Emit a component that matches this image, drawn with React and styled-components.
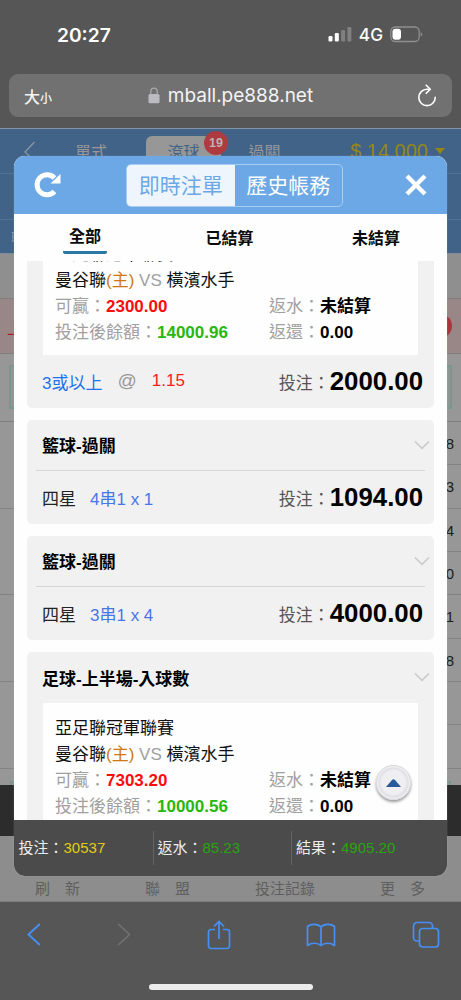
import styled, { createGlobalStyle } from "styled-components";

const GlobalStyle = createGlobalStyle`
    *{
        box-sizing: border-box;
    }

    body{
        margin: 0;
        background: #565656;
        font-family: "Liberation Sans", "Noto Sans CJK TC", sans-serif;
    }
`;

const Screen = styled.div`
    display: flex;
    flex-direction: column;
    width: 461px;
    height: 1000px;
    overflow: hidden;
    background: #565656;
    white-space: nowrap;
`;

/* ---- browser ---- */

const StatusBar = styled.div`
    display: flex;
    align-items: center;
    justify-content: space-between;
    height: 74px;
    padding: 0 38px 5px 57px;
    color: #fff;
    font-family: Inter, sans-serif;
`;

const Clock = styled.div`
    font-size: 19.2px;
    font-weight: 600;
`;

const StatusIcons = styled.div`
    display: flex;
    align-items: center;
    gap: 7px;
    font-size: 17.2px;
    font-weight: 500;
`;

const AddressBar = styled.div`
    display: grid;
    grid-template-columns: 100px 1fr 100px;
    align-items: center;
    height: 43px;
    margin: 0 9px 11px;
    padding: 0 15px;
    border-radius: 9px;
    background: #717171;
    color: #f4f4f4;
    font-size: 16px;
    font-weight: 500;
    font-family: "Noto Sans CJK TC", sans-serif;

    small{
        font-size: 12px;
    }
    > svg{
        justify-self: end;
    }
`;

const Address = styled.div`
    display: flex;
    align-items: center;
    justify-content: center;
    gap: 8px;
    font-family: Inter, sans-serif;
    font-size: 19px;
    font-weight: 400;
`;

const Toolbar = styled.div`
    display: flex;
    align-items: center;
    justify-content: space-between;
    height: 65px;
    padding: 0 21px 0 27px;
`;

const HomeIndicator = styled.div`
    width: 164px;
    height: 6px;
    margin: 17px auto 0 149px;
    border-radius: 3px;
    background: #ececec;
`;

/* ---- site behind the popup ---- */

const Page = styled.div`
    position: relative;
    display: flex;
    flex-direction: column;
    height: 774px;
    background: #979797;
    border-top: 1px solid #8295a8;
`;

const PageNav = styled.div`
    display: flex;
    height: 45px;
    padding: 7px 16px 0 24px;
    background: #416388;
    border-bottom: 1px solid #50718f;
    color: #979797;
    font-size: 16px;
`;

const NavItem = styled.div`
    width: ${props => props.width}px;
    height: 38px;
    padding-top: 3px;
    text-align: center;
    border-radius: 6px 6px 0 0;
    background: ${props => props.active ? '#979797' : 'transparent'};
    color: ${props => props.active ? '#416388' : '#979797'};
`;

const NavBadge = styled.div`
    position: absolute;
    left: 204px;
    top: 2px;
    width: 24px;
    height: 24px;
    border-radius: 50%;
    background: #ad3b40;
    color: #bdb3b3;
    font-size: 12.5px;
    font-weight: 700;
    line-height: 24px;
    text-align: center;
`;

const Balance = styled.div`
    display: flex;
    gap: 7px;
    margin-left: auto;
    color: #968715;
    font-size: 20px;
    line-height: 30px;

    svg{
        margin-top: 12px;
    }
`;

const BlueBand = styled.div`
    height: ${props => props.height}px;
    padding: 7px 0 0 11px;
    background: #416388;
    border-bottom: 1px solid ${props => props.last ? '#7c8c9c' : '#50718f'};
    color: #8a98a6;
    font-size: 13px;
`;

const GrayBand = styled.div`
    height: 45px;
    background: #8f8f8f;
    border-bottom: 1px solid #7f7f7f;
`;

const PinkBand = styled.div`
    display: flex;
    align-items: center;
    justify-content: space-between;
    height: 55px;
    padding: 0 9px 0 7px;
    background: #998686;
    border-bottom: 1px solid #7f7f7f;
    color: #a81e24;
    font-size: 17px;
`;

const RedDot = styled.div`
    width: 24px;
    height: 24px;
    border-radius: 50%;
    background: #a83539;
    color: #979797;
    line-height: 22px;
    text-align: center;
`;

const OddsBand = styled.div`
    height: 68px;
    padding: 11px 9px;
    border-bottom: 1px solid #7f7f7f;
`;

const OddsBox = styled.div`
    height: 44px;
    border: 2px solid #7b968a;
    background: #8f9693;
`;

const OddsTable = styled.div`
    display: grid;
    grid-template-columns: 1fr 1fr;
    height: 363px;
    overflow: hidden;
`;

const OddsCell = styled.div`
    height: ${props => props.tall ? 86.7 : 43.35}px;
    padding-right: 7px;
    border-bottom: 1px solid #838383;
    color: #1c1c1c;
    font-size: 15px;
    line-height: 43px;
    text-align: right;
`;

const OddsPeek = styled.div`
    grid-column: 1 / 3;
    height: 16px;
    margin: 12px 10px 0;
    border: 2px solid #7b968a;
`;

const BlackBand = styled.div`
    height: 51px;
    background: #2c2c2c;
`;

const PageTabs = styled.div`
    display: flex;
    align-items: flex-end;
    justify-content: space-between;
    flex: 1;
    padding: 0 36px 3px 35px;
    background: #8d8d8d;
    color: #5f5f5f;
    font-size: 15px;
    border-bottom: 1px solid #7d7d7d;
`;

/* ---- popup ---- */

const Popup = styled.div`
    position: absolute;
    left: 14px;
    top: 27px;
    display: flex;
    flex-direction: column;
    width: 433px;
    height: 720px;
    border-radius: 11px;
    overflow: hidden;
    background: #fefefe;
    box-shadow: 0 0 1px #bbb;
`;

const PopupHead = styled.div`
    display: flex;
    align-items: center;
    justify-content: space-between;
    height: 58px;
    padding: 0 20px;
    background: #6ba8e5;
`;

const Switch = styled.div`
    display: flex;
    width: 217px;
    height: 43px;
    margin-left: 2px;
    border: 1px solid #a9cdf1;
    border-radius: 5px;
    overflow: hidden;
`;

const SwitchButton = styled.div`
    flex: 1;
    background: ${props => props.active ? '#eff5fd' : 'transparent'};
    color: ${props => props.active ? '#6ba8e5' : '#fff'};
    font-size: 21px;
    line-height: 42px;
    text-align: center;
`;

const FilterTabs = styled.div`
    display: flex;
    justify-content: space-between;
    height: 47px;
    padding: 9px 47px 0 49px;
`;

const FilterTab = styled.div`
    height: 31px;
    padding: ${props => props.active ? '0 6px' : '2px 0 0'};
    border-bottom: ${props => props.active ? '3px solid #2878a3' : 'none'};
    border-radius: 2px;
    color: #0a0a0a;
    font-size: 16px;
    font-weight: 700;
    line-height: 27px;
`;

const BetList = styled.div`
    flex: 1;
    overflow: hidden;
    padding: 0 13px;
`;

const BetScroll = styled.div`
    display: flex;
    flex-direction: column;
    gap: 12px;
    margin-top: -84px;
`;

const Card = styled.div`
    padding: 0 9px;
    border-radius: 5px;
    background: #f1f1f1;
`;

const CardTitle = styled.div`
    display: flex;
    align-items: center;
    justify-content: space-between;
    height: 51.5px;
    padding: 0 0 0 6px;
    border-bottom: ${props => props.line ? '1.5px solid #d6d6d6' : 'none'};
    color: #000;
    font-size: 17px;
    font-weight: 700;

    svg{
        margin-right: -5px;
    }
`;

const Match = styled.div`
    display: grid;
    grid-template-columns: 214px 1fr;
    height: 126.5px;
    margin: 0 7px;
    padding: 13px 12px 0;
    background: #fefefe;
    color: #111;
    font-size: 17px;
    line-height: 26px;
    grid-auto-rows: 26px;
`;

const Wide = styled.div`
    grid-column: 1 / 3;

    em{
        font-style: normal;
        color: #d0780f;
    }
    span{
        color: #a0a0a0;
    }
`;

const Field = styled.div`
    color: #a0a0a0;

    b{
        color: ${props => props.color || '#000'};
    }
`;

const Stake = styled.div`
    display: flex;
    align-items: center;
    justify-content: space-between;
    height: 52.5px;
    padding: 0 2px 0 6px;
    color: #222;
    font-size: 17px;
`;

const Pick = styled.div`
    display: flex;
    align-items: center;
    gap: ${props => props.gap || 14}px;
    color: ${props => props.color || '#222'};

    i{
        font-style: normal;
        color: #4876e6;
    }
    small{
        font-size: 19px;
        color: #999;
    }
    strong{
        font-weight: 400;
        color: #fb1c1c;
    }
`;

const Amount = styled.div`
    display: flex;
    align-items: center;
    color: #555;

    b{
        color: #000;
        font-size: 25.8px;
    }
`;

const TopButton = styled.div`
    position: absolute;
    right: 36px;
    top: 609px;
    display: flex;
    align-items: center;
    justify-content: center;
    width: 35px;
    height: 35px;
    border: 1px solid #d5d5d8;
    border-radius: 50%;
    background: radial-gradient(#efeff2 50%, #e0e0e4 62%, #f4f4f6 70%);
    box-shadow: 0 2px 3px rgba(0, 0, 0, .4);
`;

const Totals = styled.div`
    display: grid;
    grid-template-columns: 138.5px 138.5px 1fr;
    align-items: center;
    height: 56px;
    background: #4b4b4b;
`;

const Total = styled.div`
    height: 34px;
    padding-left: ${props => props.first ? 4.5 : 4}px;
    border-left: ${props => props.first ? 'none' : '1px solid #646464'};
    color: #eee;
    font-size: 15px;
    line-height: 33px;

    span{
        color: ${props => props.color};
    }
`;

const bets = [
    { title: '足球-上半場-入球數', win: '2300.00', balance: '14000.96', amount: '2000.00' },
    { title: '籃球-過關', combo: '4串1 x 1', amount: '1094.00' },
    { title: '籃球-過關', combo: '3串1 x 4', amount: '4000.00' },
    { title: '足球-上半場-入球數', win: '7303.20', balance: '10000.56', amount: '2000.00' },
];

const BetCard = ({ bet }) => {
    return (
        <Card>
            <CardTitle line={bet.combo ? 1 : undefined}>
                {bet.title}
                <svg width="16" height="10" viewBox="0 0 16 10" fill="none" stroke="#cbcbcb" strokeWidth="1.7">
                    <path d="M1 1.5 8 8.3 15 1.5" />
                </svg>
            </CardTitle>
            {!bet.combo &&
                <Match>
                    <Wide>亞足聯冠軍聯賽</Wide>
                    <Wide>曼谷聯<em>(主)</em> <span>VS</span> 橫濱水手</Wide>
                    <Field color="#fb0d0d">可贏：<b>{bet.win}</b></Field>
                    <Field>返水：<b>未結算</b></Field>
                    <Field color="#27b80b">投注後餘額：<b>{bet.balance}</b></Field>
                    <Field>返還：<b>0.00</b></Field>
                </Match>
            }
            <Stake>
                {bet.combo
                    ? <Pick>四星<i>{bet.combo}</i></Pick>
                    : <Pick color="#1b73ee" gap="15">3或以上<small>@</small><strong>1.15</strong></Pick>
                }
                <Amount>投注：<b>{bet.amount}</b></Amount>
            </Stake>
        </Card>
    );
}

const App = () => {
    return (
        <>
            <GlobalStyle />
            <Screen>
                <StatusBar>
                    <Clock>20:27</Clock>
                    <StatusIcons>
                        <svg width="24" height="15" viewBox="0 0 24 15" fill="#fff">
                            <rect x="0.5" y="9" width="4" height="5.5" rx="1.2" />
                            <rect x="6.8" y="6" width="4" height="8.5" rx="1.2" />
                            <rect x="13.1" y="3" width="4" height="11.5" rx="1.2" opacity=".25" />
                            <rect x="19.4" y="0" width="4" height="14.5" rx="1.2" opacity=".25" />
                        </svg>
                        4G
                        <svg width="33" height="17" viewBox="0 0 33 17">
                            <rect x="0.8" y="1" width="28.4" height="14.5" rx="4.5" fill="none" stroke="#8e8e8e" strokeWidth="1.3" />
                            <rect x="2.5" y="2.8" width="8.5" height="11" rx="3" fill="#fff" />
                            <path d="M30.7 6a2.5 2.5 0 0 1 0 4.6z" fill="#8e8e8e" />
                        </svg>
                    </StatusIcons>
                </StatusBar>
                <AddressBar>
                    <div>大<small>小</small></div>
                    <Address>
                        <svg width="12" height="17" viewBox="0 0 12 17">
                            <rect x="0.5" y="7" width="11" height="9.3" rx="1.5" fill="#bdbbc2" />
                            <path d="M2.8 7.5V4.4a3.2 3.2 0 0 1 6.4 0v3.1" fill="none" stroke="#a9a8ad" strokeWidth="1.3" />
                        </svg>
                        mball.pe888.net
                    </Address>
                    <svg width="20" height="23" viewBox="0 0 20 23" fill="none" stroke="#fff" strokeWidth="1.6" strokeLinecap="round" strokeLinejoin="round">
                        <path d="M12.2 5.2H10a8.2 8.2 0 1 0 8.2 8.2" />
                        <path d="M9.2 1.2 13.3 5.2 9.2 9.3" />
                    </svg>
                </AddressBar>
                <Page>
                    <PageNav>
                        <svg width="12" height="20" viewBox="0 0 12 20" fill="none" stroke="#8c98a4" strokeWidth="1.2" style={{ marginTop: 5 }}>
                            <path d="M10.5 1 1 11l9.500 9" />
                        </svg>
                        <NavItem width="110">單式</NavItem>
                        <NavItem width="75" active={1}>滾球</NavItem>
                        <NavItem width="87">過關</NavItem>
                        <Balance>
                            <span>$ 14,000</span>
                            <svg width="10" height="6" fill="#968715"><path d="M0 0h10L5 6z" /></svg>
                        </Balance>
                    </PageNav>
                    <NavBadge>19</NavBadge>
                    <BlueBand height="46" />
                    <BlueBand height="34" last={1}>聯盟</BlueBand>
                    <GrayBand />
                    <PinkBand>上半<RedDot>−</RedDot></PinkBand>
                    <OddsBand><OddsBox /></OddsBand>
                    <OddsTable>
                        <div>
                            {[1, 2, 3, 4].map(r => <OddsCell key={r} tall={1} />)}
                        </div>
                        <div>
                            {['8', '3', '4', '0', '1', '8', '', ''].map((r, i) => <OddsCell key={i}>{r}</OddsCell>)}
                        </div>
                        <OddsPeek />
                    </OddsTable>
                    <BlackBand />
                    <PageTabs>
                        <span>刷　新</span>
                        <span>聯　盟</span>
                        <span>投注記錄</span>
                        <span>更　多</span>
                    </PageTabs>

                    <Popup>
                        <PopupHead>
                            <svg width="28" height="28" viewBox="0 0 28 28" fill="none" stroke="#fff" strokeWidth="5">
                                <path d="M20.5 20.500A10 10 0 1 1 20.500 7" />
                                <path d="M26.500 3v9.500H16.500z" fill="#fff" stroke="none" />
                            </svg>
                            <Switch>
                                <SwitchButton active={1}>即時注單</SwitchButton>
                                <SwitchButton>歷史帳務</SwitchButton>
                            </Switch>
                            <svg width="22" height="22" viewBox="0 0 22 22" stroke="#fff" strokeWidth="4.300">
                                <path d="M2 2 20 20M20 2 2 20" />
                            </svg>
                        </PopupHead>
                        <FilterTabs>
                            <FilterTab active={1}>全部</FilterTab>
                            <FilterTab>已結算</FilterTab>
                            <FilterTab>未結算</FilterTab>
                        </FilterTabs>
                        <BetList>
                            <BetScroll>
                                {bets.map((r, i) => <BetCard key={i} bet={r} />)}
                            </BetScroll>
                        </BetList>
                        <TopButton>
                            <svg width="15" height="8" fill="#285a9c"><path d="M0 8 6 1q1.500-1.500 3 0l6 7z" /></svg>
                        </TopButton>
                        <Totals>
                            <Total first={1} color="#e5cb13">投注：<span>30537</span></Total>
                            <Total color="#26a50e">返水：<span>85.23</span></Total>
                            <Total color="#26a50e">結果：<span>4905.20</span></Total>
                        </Totals>
                    </Popup>
                </Page>
                <Toolbar>
                    <svg width="14" height="23" viewBox="0 0 14 23" fill="none" stroke="#4590f7" strokeWidth="1.900">
                        <path d="M12.800 1 1.500 11.500 12.800 22" />
                    </svg>
                    <svg width="14" height="23" viewBox="0 0 14 23" fill="none" stroke="#717171" strokeWidth="1.700">
                        <path d="M1.200 1 12.500 11.500 1.200 22" />
                    </svg>
                    <svg width="24" height="30" viewBox="0 0 24 30" fill="none" stroke="#4590f7" strokeWidth="1.700">
                        <path d="M8 9.500H4a2.500 2.500 0 0 0-2.500 2.500v14A2.500 2.500 0 0 0 4 28.500h16a2.500 2.500 0 0 0 2.500-2.500V12A2.500 2.500 0 0 0 20 9.500h-4M12 19V2M7 6.500l5-5 5 5" />
                    </svg>
                    <svg width="30" height="24" viewBox="0 0 30 24" fill="none" stroke="#4590f7" strokeWidth="1.700" strokeLinejoin="round">
                        <path d="M15 4C12 .5 5 .5 1.500 3.500v19C5 19.500 12 19.500 15 22.500c3-3 10-3 13.500 0v-19C25 .5 18 .5 15 4zM15 4v18" />
                    </svg>
                    <svg width="28" height="27" viewBox="0 0 28 27" fill="none" stroke="#4590f7" strokeWidth="1.700">
                        <path d="M7.500 20H5a3.500 3.500 0 0 1-3.500-3.500V5A3.500 3.500 0 0 1 5 1.500h12A3.500 3.500 0 0 1 20.500 5v2" />
                        <rect x="7.500" y="7.500" width="19" height="18.500" rx="3" />
                    </svg>
                </Toolbar>
                <HomeIndicator />
            </Screen>
        </>
    );
}

export default App;
